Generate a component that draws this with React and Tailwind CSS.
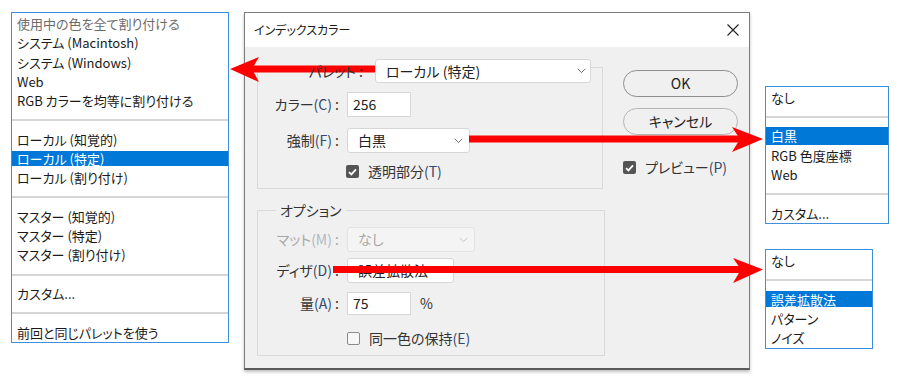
import React from "react";

const FONT = "font-['Noto_Sans_CJK_JP','Noto_Sans',sans-serif] [font-feature-settings:'palt']";

function Menu({ items, className, hlClass }) {
  return (
    <div className={`border border-[#3f8fdc] bg-white pt-[1px] ${className}`}>
      {items.map((it, i) => {
        if (it.sep) {
          return (
            <div key={i} className="h-[19.3px] flex items-center">
              <div className="h-[2px] w-full bg-[#d6d6d6]" />
            </div>
          );
        }
        if (it.hl) {
          return (
            <div key={i} className="h-[19.3px] flex items-center">
              <div className={`w-full bg-[#0078d7] text-white flex items-center px-[5px] ${hlClass}`}>{it.t}</div>
            </div>
          );
        }
        return (
          <div key={i} className={`h-[19.3px] flex items-center px-[5px] ${it.gray ? "text-[#6b6b6b]" : "text-[#1a1a1a]"}`}>
            {it.t}
          </div>
        );
      })}
    </div>
  );
}

function Chevron({ color = "#6a6a6a" }) {
  return (
    <svg width="9" height="6" viewBox="0 0 9 6" className="shrink-0">
      <path d="M0.7 0.8 L4.5 4.6 L8.3 0.8" fill="none" stroke={color} strokeWidth="1" />
    </svg>
  );
}

function Select({ text, w, disabled }) {
  return (
    <div
      className={`${w} h-[25px] rounded-[3px] border flex items-center justify-between pl-[10px] pr-[6px] ${
        disabled ? "bg-[#f4f4f4] border-[#e3e3e3] text-[#a8a8a8]" : "bg-white border-[#d6d6d6] text-[#222]"
      }`}
    >
      <span>{text}</span>
      <Chevron color={disabled ? "#c4c4c4" : "#6a6a6a"} />
    </div>
  );
}

function Check({ checked }) {
  return checked ? (
    <div className="w-[13px] h-[13px] rounded-[2px] bg-[#555] flex items-center justify-center shrink-0">
      <svg width="9" height="8" viewBox="0 0 9 8">
        <path d="M1 4.2 L3.4 6.4 L8 1.4" fill="none" stroke="#fff" strokeWidth="1.8" />
      </svg>
    </div>
  ) : (
    <div className="w-[13px] h-[13px] rounded-[2px] border border-[#8a8a8a] bg-[#f7f7f7] shrink-0" />
  );
}

const Acc = ({ children, dis }) => <span className={dis ? "text-[#b2b8c4]" : "text-[#34496e]"}>{children}</span>;

export default function App() {
  const left = [
    { t: "使用中の色を全て割り付ける", gray: true },
    { t: "システム (Macintosh)" },
    { t: "システム (Windows)" },
    { t: "Web" },
    { t: "RGB カラーを均等に割り付ける" },
    { sep: true },
    { t: "ローカル (知覚的)" },
    { t: "ローカル (特定)", hl: true },
    { t: "ローカル (割り付け)" },
    { sep: true },
    { t: "マスター (知覚的)" },
    { t: "マスター (特定)" },
    { t: "マスター (割り付け)" },
    { sep: true },
    { t: "カスタム..." },
    { sep: true },
    { t: "前回と同じパレットを使う" },
  ];
  const r1 = [
    { t: "なし" },
    { sep: true },
    { t: "白黒", hl: true },
    { t: "RGB 色度座標" },
    { t: "Web" },
    { sep: true },
    { t: "カスタム..." },
  ];
  const r2 = [
    { t: "なし" },
    { sep: true },
    { t: "誤差拡散法", hl: true },
    { t: "パターン" },
    { t: "ノイズ" },
  ];

  return (
    <div className={`relative w-[900px] h-[390px] bg-white overflow-hidden ${FONT}`}>
      <div className="flex items-start">
        <Menu items={left} className="ml-[11px] mt-[12px] w-[218px] text-[13px]" hlClass="h-[15px]" />

        {/* dialog */}
        <div className="ml-[15px] mt-[12px] w-[506px] h-[358px] border border-[#7c7c7c] border-b-2 border-b-[#5a5a5a] flex flex-col shadow-[0_2px_3px_rgba(0,0,0,0.25)]">
          <div className="h-[34px] bg-white flex items-center justify-between pl-[9px] pr-[10px] text-[12px] text-[#1a1a1a]">
            <span>インデックスカラー</span>
            <svg width="12" height="12" viewBox="0 0 12 12">
              <path d="M0.5 0.5 L11.5 11.5 M11.5 0.5 L0.5 11.5" stroke="#222" strokeWidth="1.1" />
            </svg>
          </div>
          <div className="flex-1 bg-[#f0f0f0] flex pl-[12px] pt-[12px] text-[14px] text-[#333]">
            <div className="w-[348px] flex flex-col">
              {/* palette row */}
              <div className="relative z-10 h-[24px] flex items-center">
                <div className="w-[106px] text-right">パレット :</div>
                <div className="ml-[12px] w-[216px] h-[24px] rounded-[3px] border border-[#d6d6d6] bg-white flex items-center justify-between pl-[10px] pr-[4px] text-[#222]">
                  <span>ローカル (特定)</span>
                  <Chevron />
                </div>
              </div>
              {/* group 1 */}
              <div className="-mt-[16px] w-[346px] h-[122px] border border-[#dadada] pt-[24px] flex flex-col">
                <div className="h-[25px] flex items-center">
                  <div className="w-[81px] text-right">カラー<Acc>(C)</Acc> :</div>
                  <div className="ml-[8px] w-[64px] h-[25px] bg-white border border-[#d6d6d6] flex items-center pl-[5px] text-[#222]">256</div>
                </div>
                <div className="mt-[11px] h-[25px] flex items-center">
                  <div className="w-[81px] text-right">強制<Acc>(F)</Acc> :</div>
                  <div className="ml-[8px]"><Select text="白黒" w="w-[123px]" /></div>
                </div>
                <div className="mt-[12px] h-[13px] flex items-center pl-[88px]">
                  <Check checked />
                  <span className="ml-[9px]">透明部分<Acc>(T)</Acc></span>
                </div>
              </div>
              {/* group 2 */}
              <div className="mt-[21px] w-[348px] h-[146px] border border-[#dadada] flex flex-col">
                <div className="-mt-[10px] h-[18px] leading-[18px] self-start ml-[18px] px-[4px] bg-[#f0f0f0]">オプション</div>
                <div className="mt-[8px] h-[25px] flex items-center">
                  <div className="w-[81px] text-right text-[#a8a8a8]">マット<Acc dis>(M)</Acc> :</div>
                  <div className="ml-[8px]"><Select text="なし" w="w-[128px]" disabled /></div>
                </div>
                <div className="mt-[6px] h-[25px] flex items-center">
                  <div className="w-[81px] text-right">ディザ<Acc>(D)</Acc> :</div>
                  <div className="ml-[8px]"><Select text="誤差拡散法" w="w-[107px]" /></div>
                </div>
                <div className="mt-[9px] h-[23px] flex items-center">
                  <div className="w-[81px] text-right">量<Acc>(A)</Acc> :</div>
                  <div className="ml-[8px] w-[64px] h-[23px] bg-white border border-[#d6d6d6] flex items-center pl-[5px] text-[#222]">75</div>
                  <span className="ml-[9px]">%</span>
                </div>
                <div className="mt-[17px] h-[13px] flex items-center pl-[89px]">
                  <Check />
                  <span className="ml-[9px]">同一色の保持<Acc>(E)</Acc></span>
                </div>
              </div>
            </div>
            {/* right buttons */}
            <div className="ml-[18px] flex flex-col">
              <div className="mt-[11px] w-[115px] h-[27px] rounded-full border-[1.5px] border-[#8d8d8d] bg-[#f0f0f0] flex items-center justify-center text-[#222]">OK</div>
              <div className="mt-[11px] w-[115px] h-[27px] rounded-full border border-[#b4b4b4] bg-[#f0f0f0] flex items-center justify-center text-[#222]">キャンセル</div>
              <div className="mt-[26px] h-[13px] flex items-center">
                <Check checked />
                <span className="ml-[9px]">プレビュー<Acc>(P)</Acc></span>
              </div>
            </div>
          </div>
        </div>

        {/* right menus */}
        <div className="ml-[15px] flex flex-col text-[13px]">
          <Menu items={r1} className="mt-[86px] w-[124px]" hlClass="h-[18px]" />
          <Menu items={r2} className="mt-[25px] w-[108px]" hlClass="h-[16px]" />
        </div>
      </div>

      {/* red arrows overlay */}
      <svg className="absolute left-0 top-0 pointer-events-none" width="900" height="390" viewBox="0 0 900 390">
        <g fill="#ff0000">
          <rect x="252" y="65.5" width="123" height="7" />
          <polygon points="230,69 259,57 252,69 259,82" />
          <rect x="469" y="135.5" width="272" height="7" />
          <polygon points="763,139 732,127 740,139 732,152" />
          <rect x="333" y="266" width="408" height="7" />
          <polygon points="763,269.5 733,258 741,269.5 733,283" />
        </g>
      </svg>
    </div>
  );
}
